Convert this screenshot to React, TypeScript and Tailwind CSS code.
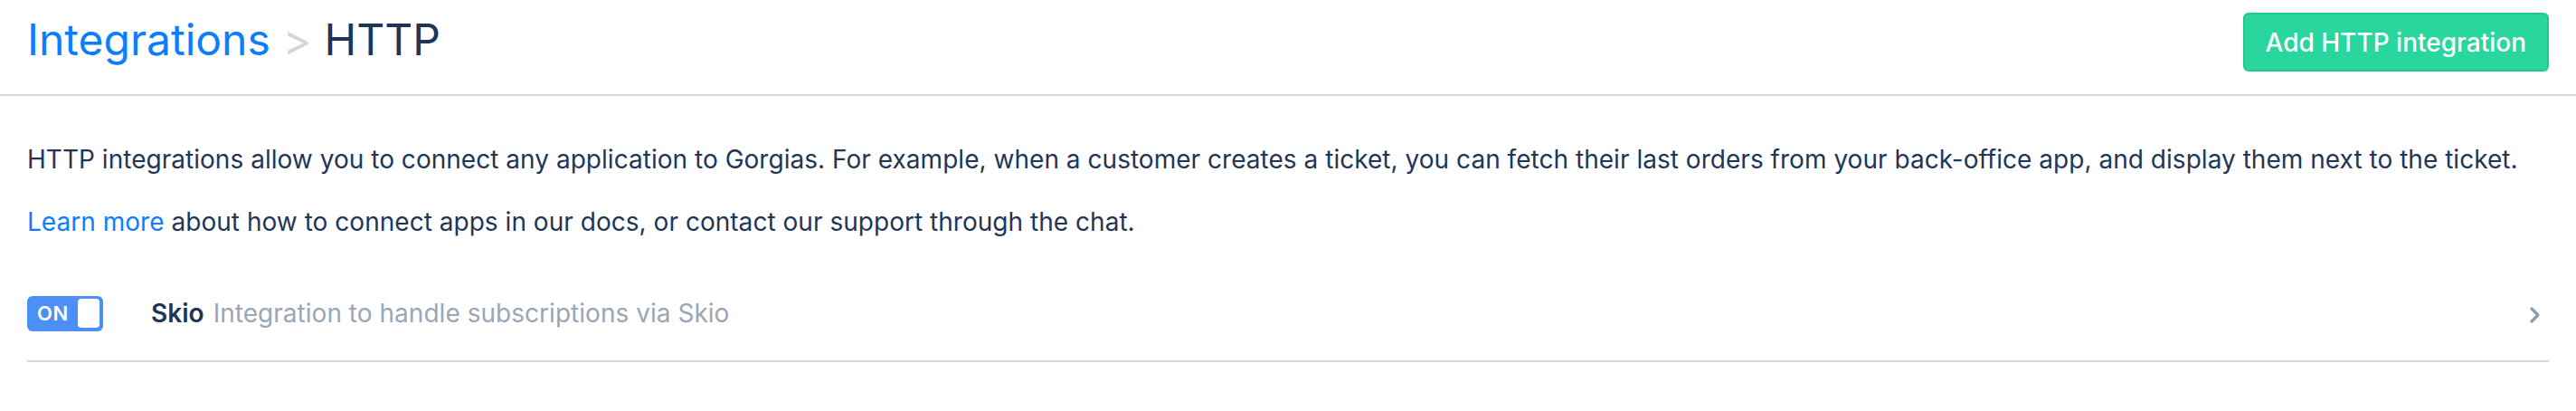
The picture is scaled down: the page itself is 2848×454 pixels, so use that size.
import { useState } from "react";

function Chevron() {
  return (
    <svg width="14" height="20" viewBox="0 0 14 20" fill="none" className="text-[#8d9bb0]">
      <polyline points="3,3 10,10 3,17" stroke="currentColor" strokeWidth="3.2" strokeLinecap="round" strokeLinejoin="round" />
    </svg>
  );
}

function Toggle({ on, onChange }: { on: boolean; onChange: () => void }) {
  return (
    <button
      type="button"
      onClick={onChange}
      className={`flex h-[39px] w-[84px] shrink-0 items-center justify-between rounded-[6px] pl-[11px] pr-[4px] ${
        on ? "bg-[#4b8ff7]" : "bg-[#c9d1dc]"
      }`}
    >
      <span className="text-[22px] font-semibold leading-none tracking-[0.5px] text-white">{on ? "ON" : "OFF"}</span>
      <span className="h-[32px] w-[24px] rounded-[4px] bg-white" />
    </button>
  );
}

export default function App() {
  const [enabled, setEnabled] = useState(true);

  return (
    <div className="min-h-screen bg-white font-['Inter',sans-serif] text-[#1f3658]">
      <header className="flex h-[106px] items-start justify-between border-b-2 border-[#d5d9df] px-[30px] pt-[12px]">
        <h1 className="text-[48px] font-normal leading-[64px]">
          <a href="#" className="text-[#0b7dff]">Integrations</a>
          <span className="mx-[14px] text-[#d1d6dd]">&gt;</span>
          <span className="text-[#1e3557]">HTTP</span>
        </h1>
        <button
          type="button"
          className="mt-[2px] h-[65px] rounded-[6px] border-2 border-[#22c690] bg-[#29d69e] px-[23px] text-[28px] font-medium text-white"
        >
          Add HTTP integration
        </button>
      </header>

      <div className="px-[30px] pt-[49px] tracking-[0.03px]">
        <p className="mb-[27px] text-[28px] leading-[42px]">
          HTTP integrations allow you to connect any application to Gorgias. For example, when a customer creates a
          ticket, you can fetch their last orders from your back-office app, and display them next to the ticket.
        </p>
        <p className="mb-[28px] text-[28px] leading-[42px]">
          <a href="#" className="text-[#0b7dff]">Learn more</a> about how to connect apps in our docs, or contact our
          support through the chat.
        </p>
      </div>

      <div className="mx-[30px] flex items-center border-b-2 border-[#d3d8de] py-[31px]">
        <Toggle on={enabled} onChange={() => setEnabled(!enabled)} />
        <div className="ml-[53px] flex-1 text-[28px] leading-[42px] tracking-[0.03px]">
          <span className="font-semibold text-[#1e3557]">Skio</span>
          <span className="ml-[10px] text-[#9aa6b8]">Integration to handle subscriptions via Skio</span>
        </div>
        <div className="mr-[8px] mt-[3px]">
          <Chevron />
        </div>
      </div>
    </div>
  );
}
